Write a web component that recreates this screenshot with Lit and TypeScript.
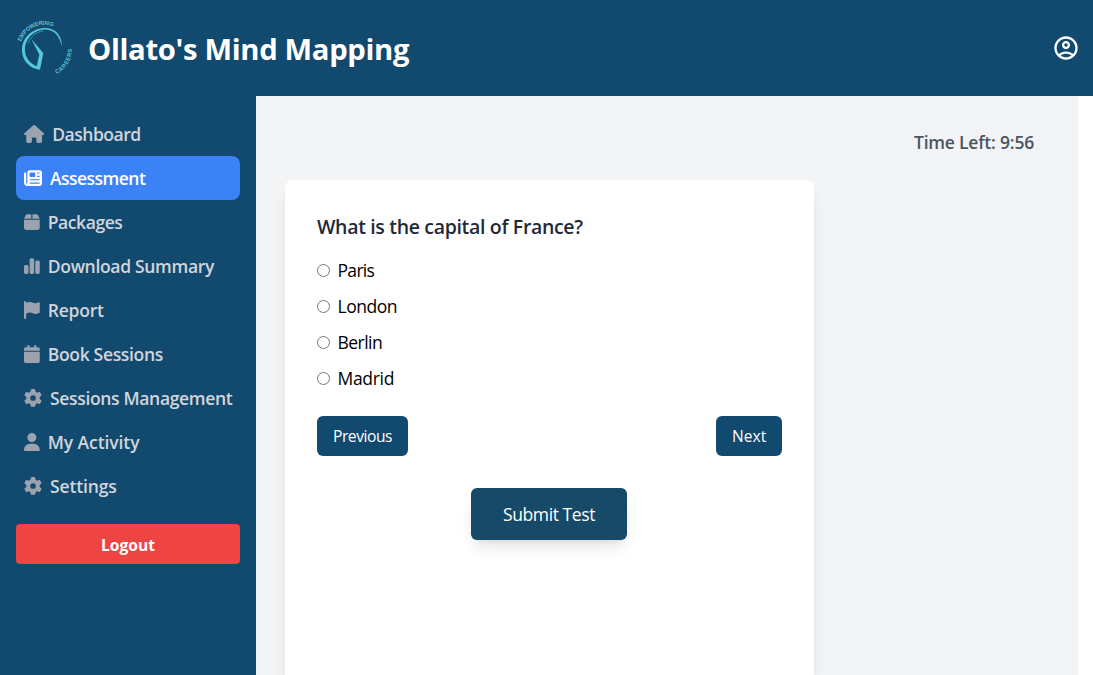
import { LitElement, html, css, svg } from "lit";
import { customElement } from "lit/decorators.js";

interface NavItem { label: string; w: number; path: string; active?: boolean; ls: number }

const GEAR = "M495.9 166.6c3.2 8.7 .5 18.4-6.4 24.6l-43.3 39.4c1.1 8.3 1.7 16.8 1.7 25.4s-.6 17.1-1.7 25.4l43.3 39.4c6.9 6.2 9.6 15.9 6.4 24.6c-4.4 11.9-9.7 23.3-15.8 34.3l-4.7 8.1c-6.6 11-14 21.4-22.1 31.2c-5.9 7.2-15.7 9.6-24.5 6.8l-55.7-17.7c-13.4 10.3-28.2 18.9-44 25.4l-12.5 57.1c-2 9.1-9 16.3-18.2 17.8c-13.8 2.3-28 3.5-42.5 3.5s-28.7-1.2-42.5-3.5c-9.2-1.5-16.2-8.7-18.2-17.8l-12.5-57.1c-15.8-6.5-30.6-15.1-44-25.4L83.1 425.9c-8.8 2.8-18.6 .3-24.5-6.8c-8.1-9.8-15.5-20.2-22.1-31.2l-4.7-8.1c-6.1-11-11.4-22.4-15.8-34.3c-3.2-8.7-.5-18.4 6.4-24.6l43.3-39.4C64.6 273.1 64 264.6 64 256s.6-17.1 1.7-25.4L22.4 191.2c-6.9-6.2-9.6-15.9-6.4-24.6c4.4-11.9 9.7-23.3 15.8-34.3l4.7-8.1c6.6-11 14-21.4 22.1-31.2c5.9-7.2 15.7-9.6 24.5-6.8l55.7 17.7c13.4-10.3 28.2-18.9 44-25.4l12.5-57.1c2-9.1 9-16.3 18.2-17.8C227.3 1.2 241.5 0 256 0s28.7 1.2 42.5 3.5c9.2 1.5 16.2 8.7 18.2 17.8l12.5 57.1c15.8 6.5 30.6 15.1 44 25.4l55.7-17.7c8.8-2.8 18.6-.3 24.5 6.8c8.1 9.8 15.5 20.2 22.1 31.2l4.7 8.1c6.1 11 11.4 22.4 15.8 34.3zM256 336a80 80 0 1 0 0-160 80 80 0 1 0 0 160z";

const NAV: NavItem[] = [
  { label: "Dashboard", w: 576, ls: -0.5, path: "M575.8 255.5c0 18-15 32.1-32 32.1l-32 0 .7 160.2c0 2.7-.2 5.4-.5 8.1l0 16.2c0 22.1-17.9 40-40 40l-16 0c-1.1 0-2.2 0-3.3-.1c-1.4 .1-2.8 .1-4.2 .1L416 512l-24 0c-22.1 0-40-17.9-40-40l0-24 0-64c0-17.7-14.3-32-32-32l-64 0c-17.7 0-32 14.3-32 32l0 64 0 24c0 22.1-17.9 40-40 40l-24 0-31.9 0c-1.5 0-3-.1-4.5-.2c-1.2 .1-2.4 .2-3.6 .2l-16 0c-22.1 0-40-17.9-40-40l0-112c0-.9 0-1.9 .1-2.8l0-69.7-32 0c-18 0-32-14-32-32.1c0-9 3-17 10-24L266.4 8c7-7 15-8 22-8s15 2 21 7L564.8 231.5c8 7 12 15 11 24z" },
  { label: "Assessment", w: 512, ls: -0.54, active: true, path: "M96 96c0-35.3 28.7-64 64-64l288 0c35.3 0 64 28.7 64 64l0 320c0 35.3-28.7 64-64 64L80 480c-44.2 0-80-35.8-80-80L0 128c0-17.7 14.3-32 32-32s32 14.3 32 32l0 272c0 8.8 7.2 16 16 16s16-7.2 16-16L96 96zm64 24l0 80c0 13.3 10.7 24 24 24l112 0c13.3 0 24-10.7 24-24l0-80c0-13.3-10.7-24-24-24L184 96c-13.3 0-24 10.7-24 24zm208-8c0 8.8 7.2 16 16 16l48 0c8.8 0 16-7.2 16-16s-7.2-16-16-16l-48 0c-8.8 0-16 7.2-16 16zm0 96c0 8.8 7.2 16 16 16l48 0c8.8 0 16-7.2 16-16s-7.2-16-16-16l-48 0c-8.8 0-16 7.2-16 16zM160 304c0 8.8 7.2 16 16 16l256 0c8.8 0 16-7.2 16-16s-7.2-16-16-16l-256 0c-8.8 0-16 7.2-16 16zm0 96c0 8.8 7.2 16 16 16l256 0c8.8 0 16-7.2 16-16s-7.2-16-16-16l-256 0c-8.8 0-16 7.2-16 16z" },
  { label: "Packages", w: 448, ls: -0.44, path: "M50.7 58.5L0 160l208 0 0-128L93.7 32C75.5 32 58.9 42.3 50.7 58.5zM240 160l208 0L397.3 58.5C389.1 42.3 372.5 32 354.3 32L240 32l0 128zm208 32L0 192 0 416c0 35.3 28.7 64 64 64l320 0c35.3 0 64-28.7 64-64l0-224z" },
  { label: "Download Summary", w: 448, ls: -0.33, path: "M160 80c0-26.5 21.5-48 48-48l32 0c26.5 0 48 21.5 48 48l0 352c0 26.5-21.5 48-48 48l-32 0c-26.5 0-48-21.5-48-48l0-352zM0 272c0-26.5 21.5-48 48-48l32 0c26.5 0 48 21.5 48 48l0 160c0 26.5-21.5 48-48 48l-32 0c-26.5 0-48-21.5-48-48L0 272zM368 96l32 0c26.5 0 48 21.5 48 48l0 288c0 26.5-21.5 48-48 48l-32 0c-26.5 0-48-21.5-48-48l0-288c0-26.5 21.5-48 48-48z" },
  { label: "Report", w: 448, ls: -0.25, path: "M64 32C64 14.3 49.7 0 32 0S0 14.3 0 32L0 64 0 368 0 480c0 17.7 14.3 32 32 32s32-14.3 32-32l0-128 64.3-16.1c41.1-10.3 84.6-5.5 122.5 13.4c44.2 22.1 95.5 24.8 141.7 7.4l34.7-13c12.5-4.7 20.8-16.6 20.8-30l0-247.7c0-23-24.2-38-44.8-27.7l-9.6 4.8c-46.3 23.2-100.8 23.2-147.1 0c-35.1-17.6-75.4-22-113.5-12.5L64 48l0-16z" },
  { label: "Book Sessions", w: 448, ls: -0.34, path: "M96 32l0 32L48 64C21.5 64 0 85.5 0 112l0 48 448 0 0-48c0-26.5-21.5-48-48-48l-48 0 0-32c0-17.7-14.3-32-32-32s-32 14.3-32 32l0 32L160 64l0-32c0-17.7-14.3-32-32-32S96 14.3 96 32zM448 192L0 192 0 464c0 26.5 21.5 48 48 48l352 0c26.5 0 48-21.5 48-48l0-272z" },
  { label: "Sessions Management", w: 512, ls: -0.35, path: GEAR },
  { label: "My Activity", w: 448, ls: -0.1, path: "M224 256A128 128 0 1 0 224 0a128 128 0 1 0 0 256zm-45.7 48C79.8 304 0 383.8 0 482.3C0 498.7 13.3 512 29.7 512l388.6 0c16.4 0 29.7-13.3 29.7-29.7C448 383.8 368.2 304 269.7 304l-91.4 0z" },
  { label: "Settings", w: 512, ls: -0.16, path: GEAR },
];

const OPTIONS = [
  { label: "Paris", ls: -0.7 },
  { label: "London", ls: -0.48 },
  { label: "Berlin", ls: -0.55 },
  { label: "Madrid", ls: -0.33 },
];

@customElement("app-root")
export class AppRoot extends LitElement {
  static styles = css`
    :host { display: flex; flex-direction: column; height: 100vh; overflow: hidden; background: #fff; font-family: "Open Sans", sans-serif; font-size: 16px; line-height: 24px; }
    * { box-sizing: border-box; }
    button { font: inherit; border: 0; padding: 0; margin: 0; color: #fff; }
    .header { flex: none; height: 96px; background: #11496f; display: flex; align-items: center; padding: 0 13px 0 16px; color: #fff; }
    .logo { width: 56px; height: 56px; margin-right: 16px; overflow: visible; }
    .logo-text { font: 700 5.8px "Liberation Sans", sans-serif; fill: #54c0d6; }
    .title { flex: 1; margin: 0; padding-top: 1px; font-size: 29.25px; line-height: 36px; font-weight: 700; letter-spacing: -.34px; }
    .account { width: 28px; height: 28px; }
    .body { flex: 1; min-height: 0; display: flex; }
    .side { width: 256px; background: #11496f; padding: 16px; }
    .item { display: flex; align-items: center; height: 44px; padding: 8px; gap: 8px; border-radius: 8px; color: #9ca3af; font-size: 17.55px; line-height: 28px; font-weight: 600; white-space: nowrap; }
    .item svg { height: 18px; flex: none; }
    .item span { color: #d1d5db; }
    .item.active, .item.active span { color: #fff; }
    .item.active { background: #3b82f6; }
    .logout { width: 100%; height: 40px; margin-top: 16px; padding-top: 1px; background: #ef4444; border-radius: 4px; font-size: 15.6px; font-weight: 700; }
    .main { width: 822px; background: #f3f4f6; padding: 32px 44px 0 29px; display: flex; flex-direction: column; }
    .time { align-self: flex-end; font-size: 17.55px; line-height: 28px; font-weight: 600; color: #4b5563; letter-spacing: -.22px; }
    .card { margin-top: 24px; width: 529px; flex: 1; background: #fff; border-radius: 8px 8px 0 0; padding: 32px; box-shadow: 0 10px 15px -3px rgba(0,0,0,.1), 0 4px 6px -4px rgba(0,0,0,.1); }
    .q { margin: 0 0 15px; padding-top: 1px; font-size: 19.5px; line-height: 28px; font-weight: 600; color: #1f2937; letter-spacing: -.33px; }
    .opt { display: flex; align-items: center; font-size: 17.55px; line-height: 28px; margin-bottom: 8px; }
    .opt input { margin: 0 7.5px 0 0; width: 13px; height: 13px; }
    .row { display: flex; justify-content: space-between; margin-top: 24px; }
    .btn { height: 40px; padding: 0 16px; background: #11496f; border-radius: 6px; font-size: 15.6px; }
    .prev { width: 91px; letter-spacing: -.45px; }
    .next { width: 66px; }
    .center { display: flex; justify-content: center; margin-top: 32px; padding-right: 1px; }
    .submit { width: 156px; height: 52px; background: #174969; border-radius: 6px; font-size: 17.55px; letter-spacing: -.43px; box-shadow: 0 10px 15px -3px rgba(0,0,0,.1), 0 4px 6px -4px rgba(0,0,0,.1); }
  `;

  render() {
    return html`
      <header class="header">
        <svg class="logo" viewBox="0 0 56 56" fill="none">
          <path fill="#54c8dc" d="M46 26.5 C46 14 38 8 29.5 8 C16 8 6 18 6 30 C6 40.5 13.5 48.5 24 49.8 L27.3 33 L15.3 19 L23.3 34.5 L20.8 46.2 C13.5 43.5 8.9 37 8.9 29.5 C9 18.5 18 10.3 28.5 9.6 C38 9.4 43.5 16 46 26.5z"/>
          <path stroke="#54c8dc" stroke-opacity=".7" stroke-width=".8" d="M12 23.5C14 17 20 12 27 11"/>
          <path id="arc-top" d="M5.2 21.6A24 24 0 0 1 39 7.6"/>
          <path id="arc-side" d="M40.5 54A28 28 0 0 0 56 27"/>
          <text class="logo-text" textLength="39"><textPath href="#arc-top" textLength="39">EMPOWERING</textPath></text>
          <text class="logo-text" textLength="31"><textPath href="#arc-side" textLength="31">CAREERS</textPath></text>
        </svg>
        <h1 class="title">Ollato's Mind Mapping</h1>
        <svg class="account" viewBox="0 0 24 24" fill="#fff"><path d="M12 2C6.48 2 2 6.48 2 12s4.48 10 10 10 10-4.48 10-10S17.52 2 12 2zM7.35 18.5C8.66 17.56 10.26 17 12 17s3.34.56 4.65 1.5c-1.31.94-2.91 1.5-4.65 1.5s-3.34-.56-4.65-1.5zm10.79-1.38C16.45 15.8 14.32 15 12 15s-4.45.8-6.14 2.12C4.7 15.73 4 13.95 4 12c0-4.42 3.58-8 8-8s8 3.58 8 8c0 1.95-.7 3.73-1.86 5.12z"/><path d="M12 6c-1.93 0-3.5 1.57-3.5 3.5S10.07 13 12 13s3.5-1.57 3.5-3.5S13.93 6 12 6zm0 5c-.83 0-1.5-.67-1.5-1.5S11.17 8 12 8s1.5.67 1.5 1.5S12.83 11 12 11z"/></svg>
      </header>
      <div class="body">
        <nav class="side">
          ${NAV.map((n) => html`<div class="item ${n.active ? "active" : ""}"><svg viewBox="0 0 ${n.w} 512" fill="currentColor">${svg`<path d=${n.path}/>`}</svg><span style="letter-spacing:${n.ls}px">${n.label}</span></div>`)}
          <button class="logout">Logout</button>
        </nav>
        <main class="main">
          <div class="time">Time Left: 9:56</div>
          <section class="card">
            <h2 class="q">What is the capital of France?</h2>
            ${OPTIONS.map((o) => html`<label class="opt"><input type="radio" name="answer" /><span style="letter-spacing:${o.ls}px">${o.label}</span></label>`)}
            <div class="row"><button class="btn prev">Previous</button><button class="btn next">Next</button></div>
            <div class="center"><button class="submit">Submit Test</button></div>
          </section>
        </main>
      </div>
    `;
  }
}
